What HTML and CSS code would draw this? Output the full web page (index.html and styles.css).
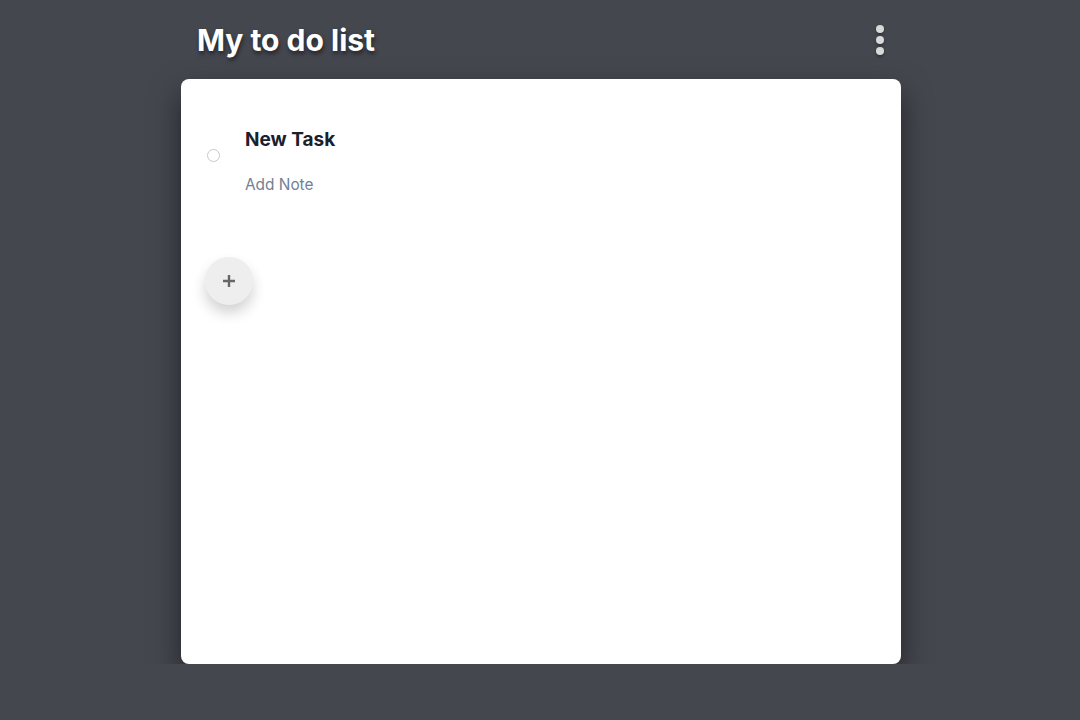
FILE: index.html
```html
<!DOCTYPE html>
<html>
<head>
<meta charset="utf-8">
<link rel="stylesheet" href="styles.css">
</head>
<body>
<div class="app">
  <header class="header">
    <h1 class="title">My to do list</h1>
    <button class="menu" aria-label="Menu">
      <span class="dot"></span><span class="dot"></span><span class="dot"></span>
    </button>
  </header>
  <main class="card">
    <div class="task">
      <span class="check"></span>
      <div class="task-body">
        <div class="task-title">New Task</div>
        <div class="task-note">Add Note</div>
      </div>
    </div>
    <button class="fab" aria-label="Add task">
      <svg width="14" height="14" viewBox="0 0 14 14"><path d="M7 1v12M1 7h12" stroke="#666666" stroke-width="2.4"/></svg>
    </button>
  </main>
</div>
</body>
</html>
```

FILE: styles.css
```css
html, body {
  margin: 0;
  padding: 0;
  background: #45474f;
  font-family: Inter, "Noto Sans", sans-serif;
}
body {
  padding-left: 2px;
}
.app {
  width: 720px;
  margin: 0 auto;
}
.header {
  height: 79px;
  display: flex;
  align-items: center;
  justify-content: space-between;
  padding: 0 16px;
  box-sizing: border-box;
}
.title {
  margin: 0;
  color: #fff;
  font-size: 30px;
  font-weight: 700;
  text-shadow: 1px 3px 4px rgba(0,0,0,0.5);
}
.menu {
  background: none;
  border: 0;
  padding: 0;
  display: flex;
  flex-direction: column;
  gap: 3px;
  margin-right: 1px;
}
.dot {
  width: 8px;
  height: 8px;
  border-radius: 50%;
  background: #d9d9d9;
  box-shadow: 0 2px 3px rgba(0,0,0,0.3);
}
.card {
  background: #fff;
  border-radius: 8px;
  height: 585px;
  box-shadow: 0 14px 30px rgba(0,0,0,0.5);
  padding: 47px 24px 0;
  box-sizing: border-box;
}
.task {
  display: flex;
  align-items: flex-start;
  gap: 25px;
}
.check {
  width: 11px;
  height: 11px;
  border: 1px solid #c8c8c8;
  border-radius: 50%;
  flex: none;
  margin-left: 2px;
  margin-top: 23px;
}
.task-title {
  font-size: 19px;
  font-weight: 700;
  color: #1a202c;
  line-height: 28px;
}
.task-note {
  margin-top: 20px;
  font-size: 15.4px;
  color: #718096;
  line-height: 22px;
}
.fab {
  margin-top: 61px;
  width: 48px;
  height: 48px;
  border-radius: 50%;
  border: 0;
  background: #eeeeee;
  display: flex;
  align-items: center;
  justify-content: center;
  box-shadow: 0 8px 14px rgba(0,0,0,0.18);
  padding: 0;
}
```
